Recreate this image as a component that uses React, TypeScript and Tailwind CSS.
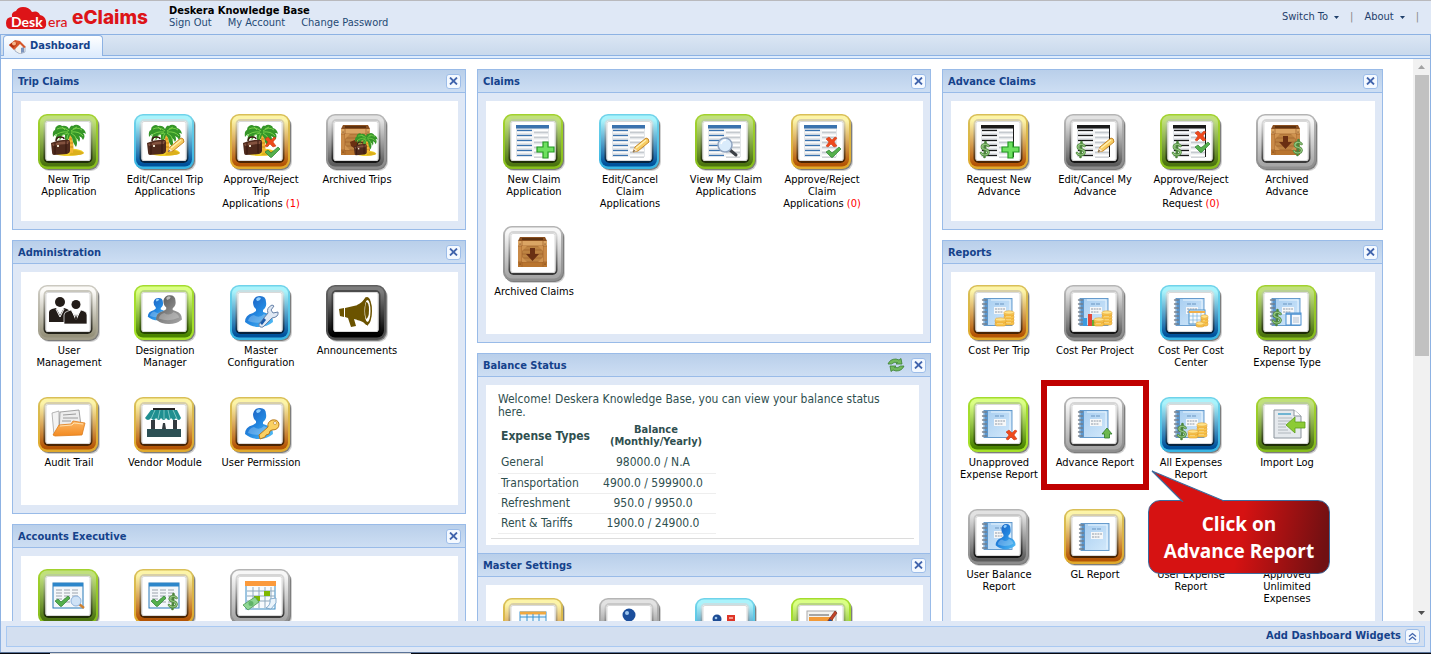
import React from "react";

type Tone = "green" | "lime" | "blue" | "gold" | "gray" | "silver" | "cream" | "black";

const tones: Record<Tone, { rim: [string, string]; body: [string, string]; ring: [string, string] }> = {
  green: { rim: ["#a2d22e", "#86bd1c"], body: ["#c0e07c", "#4c7410"], ring: ["#b9cf95", "#1f2d08"] },
  lime: { rim: ["#a4dc2e", "#a4e028"], body: ["#daff85", "#4a8400"], ring: ["#b8d680", "#274600"] },
  blue: { rim: ["#6fd3ea", "#38b4e2"], body: ["#aaf3fb", "#00529c"], ring: ["#c6e0e4", "#06233f"] },
  gold: { rim: ["#d9bf57", "#e0a92c"], body: ["#fcf4a8", "#b45506"], ring: ["#d8cfa8", "#4a2403"] },
  gray: { rim: ["#b5b5b5", "#8c8c8c"], body: ["#e2e2e2", "#5c5c5c"], ring: ["#c8c8c8", "#161616"] },
  silver: { rim: ["#b4b4b4", "#8f8f8f"], body: ["#f7f7f7", "#a6a6a6"], ring: ["#d6d6d6", "#3a3a3a"] },
  cream: { rim: ["#cbc9c0", "#a19d89"], body: ["#fbfaf7", "#95917a"], ring: ["#c9c7bd", "#232219"] },
  black: { rim: ["#5e5e5e", "#4c4c4c"], body: ["#7d7d7d", "#000000"], ring: ["#4b4b4b", "#000000"] },
};

function Gradients() {
  return (
    <svg className="absolute size-0" aria-hidden="true">
      <defs>
        {(Object.keys(tones) as Tone[]).map((t) => (
          <React.Fragment key={t}>
            {(["rim", "body", "ring"] as const).map((k) => (
              <linearGradient key={k} id={`${t}-${k}`} x1="0" y1="0" x2="0" y2="1">
                <stop offset="0.1" stopColor={tones[t][k][0]} />
                <stop offset="0.95" stopColor={tones[t][k][1]} />
              </linearGradient>
            ))}
          </React.Fragment>
        ))}
        <linearGradient id="book" x1="0" y1="0" x2="1" y2="1">
          <stop offset="0" stopColor="#a6cdf0" />
          <stop offset="1" stopColor="#d3e9fb" />
        </linearGradient>
        <linearGradient id="person-blue" x1="0" y1="0" x2="1" y2="1">
          <stop offset="0" stopColor="#1a55b8" />
          <stop offset="0.5" stopColor="#2387e0" />
          <stop offset="1" stopColor="#56c0f6" />
        </linearGradient>
        <linearGradient id="person-gray" x1="0" y1="0" x2="1" y2="1">
          <stop offset="0" stopColor="#4c4c4c" />
          <stop offset="0.6" stopColor="#8a8a8a" />
          <stop offset="1" stopColor="#a5a5a5" />
        </linearGradient>
        <linearGradient id="folder" x1="0" y1="0" x2="0" y2="1">
          <stop offset="0" stopColor="#fdb865" />
          <stop offset="1" stopColor="#f28a22" />
        </linearGradient>
      </defs>
    </svg>
  );
}

const Palm = () => (
  <g>
    <path d="M18 40q8-6 20-5 7 1 8 4-6 3-15 3-10 0-13-2z" fill="#f2d02a" />
    <path d="M31 41q13 1 15-2-4-3-11-3z" fill="#dcb01c" />
    <path d="M29 19q4 8 0 19l6 1q2-10-3-20z" fill="#f3b733" />
    <path d="M31 25h3M31 29h4M30 33h5" stroke="#c9831a" />
    <path
      d="M31 15q-2-4-7-3-2-2-5 0-2 1-2 4-3 1-2 7 2-3 4-3-2 4-1 7 2-2 3-5 1 2 1 4 2-2 2-5 2-1 3 0-1 3 1 7 3-2 4-7 3 3 3 7 2 4 3 5 2-4 0-9 2 1 3 4 2-3 0-6 3 1 4 4 3-4 0-7 2 0 3 1-1-5-5-6 0-2-3-3-3-1-5 1-2-2-4 3z"
      fill="#359628"
    />
    <path
      d="M31 17q-6-5-12-2M30 18q-8-1-13 4M30 19q-6 1-9 7M33 17q6-5 11-1M33 18q8-1 12 4M33 19q5 2 6 8M31 19q-2 3-2 6M24 13l3 3M39 13l-4 2"
      stroke="#7fd64c"
      strokeWidth=".9"
      fill="none"
    />
    <path d="M18 27q0-4 4-4t4 2" stroke="#3b1c12" strokeWidth="1.500" fill="none" />
    <path d="M13 29q9-4 18-3 1 0 1 3v8q0 2-3 3l-13 1q-2 0-2-3z" fill="#4f2a1d" />
    <path d="M14 30q9-3 17-3l-1 3q-8 0-15 2z" fill="#83523f" />
    <path d="M17 29v11M28 27v12" stroke="#34170f" />
    <rect x="19" y="31" width="2" height="2" fill="#e8dcc8" />
  </g>
);

const Crate = () => (
  <g>
    <path d="M17 11h25l2 4H15z" fill="#8a4f1f" />
    <path d="M19 12h21v2H19z" fill="#5e3210" />
    <rect x="15" y="15" width="29" height="26" rx="1" fill="#c98a48" />
    <rect x="15" y="15" width="29" height="5" fill="#dba564" />
    <rect x="15" y="36" width="29" height="5" fill="#b9752f" />
    <rect x="19" y="20" width="21" height="16" fill="#bd8342" />
    <path d="M19 24h21M19 28h21M19 32h21M15 20h29M15 36h29M19 15v26M40 15v26" stroke="#9d6029" strokeWidth=".7" />
    <path d="M19 20h5l-5 5zM40 20h-5l5 5zM19 36v-5l5 5zM40 36v-5l-5 5z" fill="#cf9350" />
    <path d="M17 18h.1M42 18h.1M17 38h.1M42 38h.1" stroke="#5a2e0c" strokeWidth="1.200" strokeLinecap="round" />
  </g>
);
const DownArrow = () => <path d="M27 22h5v6h4l-6.500 7-6.500-7h4z" fill="#6a2f12" />;

const Sheet = ({ dark = false }: { dark?: boolean }) => {
  const c = dark ? "#1a1a1a" : "#3a72ae";
  return (
    <g>
      <rect x="13" y="12" width="33" height="31" fill="#e3e6e9" />
      <rect x="13" y="11" width="33" height="3.500" fill={c} />
      {[17, 22, 27, 32, 37, 42].map((y) => (
        <g key={y}>
          <path d={`M14 ${y - 0.5}h15`} stroke={c} strokeWidth="1.300" />
          <path d={`M14 ${y + 1.2}h15`} stroke="#fff" strokeWidth="1.200" />
          <path d={`M31 ${y - 0.5}h14`} stroke="#ffffff" strokeWidth="2.200" />
          <path d={`M31 ${y + 1.2}h14`} stroke="#b3b8be" strokeWidth=".9" />
        </g>
      ))}
      <path d="M30 15v28" stroke="#f8f8f8" strokeWidth="1.500" />
      {dark && <path d="M45.500 12v31" stroke="#1a1a1a" />}
    </g>
  );
};

const Plus = () => (
  <path d="M40 28h5v5h6v5h-6v6h-5v-6h-6v-5h6z" fill="#6ee060" stroke="#249a22" strokeWidth="1.200" />
);
const Pencil = () => (
  <g>
    <path d="M34 38l2-5 11-9q3 0 3 4L39 37z" fill="#f8cd62" stroke="#c07e1e" strokeWidth=".9" />
    <path d="M37 34l10-8" stroke="#fff0b4" strokeWidth="1.500" />
    <path d="M34 38l1.500-4 3 3z" fill="#f6e3c8" />
    <path d="M34 38l2-1-1-1z" fill="#222" />
  </g>
);
const Cross = ({ x = 35, y = 23 }: { x?: number; y?: number }) => (
  <path
    transform={`translate(${x} ${y})`}
    d="M0 2l3-2 3 3 3-3 2 1-3 4 3 4-3 1-3-3-3 3-2-1 3-4z"
    fill="#ee4a1c"
    stroke="#c62f0c"
    strokeWidth=".5"
  />
);
const Check = ({ x = 35, y = 33 }: { x?: number; y?: number }) => (
  <path transform={`translate(${x} ${y})`} d="M0 5l3-2 3 3 7-6 2 2-8 8q-1 1-2 0z" fill="#55b04c" stroke="#2f7f35" strokeWidth=".7" />
);
const Dollar = ({ x = 12, y = 28 }: { x?: number; y?: number }) => (
  <g transform={`translate(${x} ${y})`} fill="none" strokeLinecap="round">
    <path d="M8.500 4Q7 2 4.500 2.300 1.500 3 2 5.500q.5 1.500 3.500 2 3 .7 3 3-.5 2.500-4 2.500Q2 13 1 11M5.500 0 4.500 15" stroke="#4c853b" strokeWidth="2.600" />
    <path d="M8.500 4Q7 2 4.500 2.300 1.500 3 2 5.500q.5 1.500 3.500 2 3 .7 3 3-.5 2.500-4 2.500Q2 13 1 11" stroke="#96c982" strokeWidth="1.200" />
  </g>
);
const Lens = () => (
  <g>
    <path d="M35 36l6 5" stroke="#3c4046" strokeWidth="3" strokeLinecap="round" />
    <circle cx="30" cy="31" r="7" fill="#d9ebfb" stroke="#8fa3bf" strokeWidth="1.500" />
    <path d="M26 30q1-4 5-4" stroke="#fff" strokeWidth="1.500" fill="none" />
  </g>
);
const Book = () => (
  <g>
    <rect x="16" y="13.500" width="28" height="27" fill="url(#book)" stroke="#5a93c8" strokeWidth=".9" />
    <rect x="17" y="14" width="3" height="26" fill="#5b96cc" />
    <path d="M23 15h19v24" stroke="#e9f5fe" fill="none" />
    <path d="M27 19h4m1 0h4" stroke="#6b95c0" />
    <rect x="26" y="22" width="12" height="7" fill="#f6f7f8" />
    <path d="M27 24h10M27 27h8" stroke="#8e99a6" strokeDasharray="2 .7" />
    {[15, 19, 23, 27, 31, 35, 39].map((y) => (
      <path key={y} d={`M14.500 ${y}h4`} stroke="#74808d" strokeWidth="1.300" strokeLinecap="round" />
    ))}
  </g>
);
const Stack = ({ x, y, n, w = 10 }: { x: number; y: number; n: number; w?: number }) => (
  <g>
    {Array.from({ length: n }, (_, i) => (
      <g key={i}>
        <rect x={x} y={y - i * 3 - 3} width={w} height="4" rx="2" fill="#f9c64e" stroke="#dd9826" strokeWidth=".6" />
        <path d={`M${x + 2} ${y - i * 3 - 1.5}h${w - 5}`} stroke="#ffe9a0" />
      </g>
    ))}
    <ellipse cx={x + w / 2} cy={y - n * 3 + 0.5} rx={w / 2} ry="1.700" fill="#ffe48c" stroke="#e0a030" strokeWidth=".6" />
  </g>
);
const Coins = () => (
  <g>
    <Stack x={36} y={39} n={4} />
    <Stack x={27} y={40} n={2} w={11} />
  </g>
);
const Person = ({ gray = false }: { gray?: boolean }) => (
  <g>
    <path d="M15 37q0-7 8-9l3-2v-2q-3-2-3-7 1-6 7-6t6 6q1 5-3 8v2l3 1q7 2 7 9-6 5-14 5t-14-5z" fill={gray ? "url(#person-gray)" : "url(#person-blue)"} />
    <path d="M26 14q2-3 5-1-1 3-4 3z" fill={gray ? "#b9b9b9" : "#8fd0ff"} />
    <path d="M18 36q1-5 6-6 5 4 10-1 5 2 6 6-11 5-22 1z" fill="#fff" opacity=".25" />
  </g>
);
const Grid = ({ check = false }: { check?: boolean }) => (
  <g>
    <rect x="15" y="14" width="30" height="25" fill="#f4f7fa" stroke="#2678b8" />
    <rect x="15" y="14" width="30" height="3.500" fill="#2c86ca" />
    {[21, 24, 27, 30, 33].map((y) => (
      <path key={y} d={`M18 ${y}h6m2 0h6m2 0h6`} stroke="#9ba3ab" strokeWidth="1.200" />
    ))}
    {check && <Check x={17} y={27} />}
  </g>
);

const glyphs: Record<string, React.ReactNode> = {
  trip: <Palm />,
  tripEdit: (<><Palm /><Pencil /></>),
  tripApprove: (<><Palm /><Cross /><Check /></>),
  tripArchive: (<><Crate /><path d="M24 28l7-3v11l-6-4z" fill="#6a2f12" /><g transform="translate(19 11) scale(.68 .74)"><Palm /></g></>),
  claim: (<><Sheet /><Plus /></>),
  claimEdit: (<><Sheet /><Pencil /></>),
  claimView: (<><Sheet /><Lens /></>),
  claimApprove: (<><Sheet /><Cross /><Check /></>),
  crate: (<><Crate /><DownArrow /></>),
  advance: (<><Sheet dark /><Dollar /><Plus /></>),
  advanceEdit: (<><Sheet dark /><Dollar /><Pencil /></>),
  advanceApprove: (<><Sheet dark /><Dollar /><Cross x={35} y={17} /><Check x={35} y={28} /></>),
  advanceArchive: (<><Crate /><DownArrow /><Dollar x={37} y={26} /></>),
  users: (
    <g fill="#231c18">
      <circle cx="22" cy="17" r="5" />
      <path d="M11 37V27q0-2 3-3l4-1 4 7 4-7q5 1 6 4v10z" />
      <path d="M18 24l4 8 4-8" stroke="#fff" fill="none" />
      <circle cx="38" cy="20" r="5.500" fill="#fff" />
      <circle cx="38" cy="19.500" r="4.500" />
      <path d="M26 39V30q0-3 4-4l3-1 5 7 5-7 3 1q3 1 3 4v9z" stroke="#fff" strokeWidth=".7" />
      <path d="M34 26l4 9 4-9" stroke="#fff" fill="none" />
      <path d="M38 29l-1 5 1 3 1-3z" />
    </g>
  ),
  designation: (<><g transform="translate(3 5) scale(.72)"><Person /></g><g transform="translate(8 0) scale(.93)"><Person gray /></g></>),
  config: (
    <>
      <Person />
      <path d="M29 39l9-11q-2-5 4-8l2 1-3 4 2 3 5-1q1 5-6 6l-9 9q-4 1-4-3z" fill="#dfe8f3" stroke="#6681a8" />
      <path d="M30 38l4-5 2 2-4 5z" fill="#1d5aa8" />
    </>
  ),
  announce: (
    <g fill="#6b5300">
      <path d="M19 23l13-3V35l-4-1 2 7-5 1-3-9-3-1z" />
      <path d="M13 24l5-1v9l-4-1z" />
      <path d="M31 20q6-3 9-8l2 29q-5-5-11-6z" />
      <ellipse cx="41" cy="26" rx="5" ry="14" />
      <ellipse cx="41.500" cy="26" rx="3" ry="11" fill="#fff" />
      <path d="M40 17q3 0 3 8t-3 9q-2-8 0-17z" />
    </g>
  ),
  folder: (
    <g>
      <path d="M14 16l7-2v23l-5 1z" fill="#f3f3f3" stroke="#999" strokeWidth=".7" />
      <path d="M22 15l19-2 3 24H21z" fill="#ededed" stroke="#8d8d8d" strokeWidth=".8" />
      <path d="M25 18l13-1M25 21h15M24 24h9" stroke="#9a9a9a" />
      <path d="M21 28l12-1 2-3 12 2-3 12-27 1-2-1z" fill="url(#folder)" stroke="#e07d1c" strokeWidth=".8" />
      <path d="M22 29l12-1 2-2 9 1" stroke="#ffe0ae" fill="none" />
    </g>
  ),
  shop: (
    <g>
      <rect x="19" y="11" width="22" height="2" fill="#222" />
      <path d="M17 13h26l4 8q-2 4-5 0-2 4-5 0-2 4-5 0-2 4-5 0-2 4-5 0-2 4-5 0-3 4-6 0z" fill="#1f8f90" />
      <path d="M21 13l-4 9M26 13l-2 9M30 13v9M34 13l2 9M39 13l4 9" stroke="#7cc4c0" />
      <path d="M17 23h4v9h-4zM39 23h4v9h-4zM28 32l1-6h2l1 6z" fill="#333b40" />
      <rect x="13" y="32" width="34" height="8" fill="#2c5054" />
    </g>
  ),
  permission: (
    <>
      <Person />
      <path d="M29 38l9-8q-1-5 4-7 6-1 7 4 0 6-7 6l-2 1-1 3-3 1-1 2-5 2z" fill="#fad062" stroke="#b7791c" />
      <circle cx="45" cy="26" r="1.500" fill="#fff" stroke="#b7791c" strokeWidth=".6" />
    </>
  ),
  bookCoins: (<><Book /><Coins /></>),
  bookProject: (
    <>
      <Book />
      <path d="M19 33h4v8h-4z" fill="#3c9be0" />
      <path d="M24 29h4v12h-4z" fill="#e4483a" />
      <path d="M28 35h3v6h-3z" fill="#5fae35" />
      <Stack x={38} y={39} n={4} />
      <Stack x={30} y={40} n={2} />
    </>
  ),
  bookCenter: (
    <>
      <Book />
      <rect x="29" y="25" width="16" height="14" fill="#f5fafd" stroke="#4a90c8" />
      <path d="M29 27h16" stroke="#f2b04a" strokeWidth="2" />
      <path d="M29 31h16M29 35h16M33 28v11M37 28v11M41 28v11" stroke="#7db3d8" strokeWidth=".7" />
      <Stack x={41} y={40} n={3} w={7} />
      <Stack x={36} y={41} n={1} w={8} />
    </>
  ),
  bookType: (
    <>
      <Book />
      <Dollar x={16} y={25} />
      <rect x="30" y="28" width="15" height="12" fill="#f5f9fd" stroke="#4a8fd0" />
      <path d="M30 29h15M35 29v11" stroke="#4a8fd0" strokeWidth="1.500" />
      <path d="M37 32h6v6h-6z" fill="#d5dde6" />
    </>
  ),
  bookReject: (<><Book /><Cross x={38} y={33} /></>),
  bookUp: (<><Book /><path d="M43 31l5 6h-2.500v4h-5v-4H38z" fill="#6db84e" stroke="#2f7a2a" strokeWidth=".8" /></>),
  bookAll: (<><Book /><Dollar x={17} y={27} /><Stack x={37} y={39} n={4} /><Stack x={28} y={40} n={2} /></>),
  import: (
    <g>
      <path d="M18 13h20l7 6v22H18z" fill="#e5e9ed" stroke="#8b949c" />
      <path d="M38 13v6h7" fill="#fff" stroke="#8b949c" />
      <path d="M22 17h13" stroke="#6fb4d2" strokeWidth="2" />
      <path d="M22 21h14M22 24h12M22 27h8M22 30h8M22 33h10M22 36h13" stroke="#b0b7bd" />
      <path d="M30 28l9-8v5h10v6H39v5z" fill="#8ccb35" stroke="#5a9c1a" strokeWidth=".8" />
    </g>
  ),
  bookUser: (<><Book /><g transform="translate(17 6) scale(.71 .82)"><Person /></g></>),
  book: <g transform="translate(1 1)"><Book /></g>,
  gridView: (
    <>
      <Grid check />
      <path d="M41 35l5 4" stroke="#d08030" strokeWidth="2.500" />
      <circle cx="38" cy="32" r="5" fill="#cfe2f6" stroke="#8fb2dc" />
    </>
  ),
  gridPay: (<><Grid check /><Dollar x={34} y={25} /></>),
  calendar: (
    <>
      <rect x="16" y="14" width="29" height="26" fill="#f8fbfd" stroke="#3b8cc4" />
      <rect x="15" y="12" width="31" height="5" fill="#fb9a3c" />
      <path d="M17 22h28M17 27h28M17 32h28M23 18v21M29 18v21M35 18v21M41 18v21" stroke="#8fa9bd" />
      <path d="M34 22h6v5h-6zM24 27h6v5h-6z" fill="#7fb800" />
      <path d="M36 39q5-3 4-9l6-1v5l-5 6z" fill="#eaf4fb" stroke="#6e9cc2" strokeWidth=".8" />
      <path d="M13 36l12-8 4 5-11 8z" fill="#8fd694" stroke="#4c9a55" strokeWidth=".8" />
      <circle cx="21" cy="34.500" r="2.500" fill="#5fb368" />
    </>
  ),
  masterGrid: (
    <>
      <rect x="17" y="14" width="26" height="24" fill="#eaf5fd" stroke="#3a92d0" />
      <path d="M17 15h26" stroke="#f0a840" strokeWidth="3" />
      <path d="M17 19h26M17 24h26M24 16v20M30 16v20M36 16v20" stroke="#3a92d0" />
    </>
  ),
  masterUser: (<><circle cx="30" cy="17" r="6.500" fill="#1c4f9c" /><circle cx="28" cy="15" r="2" fill="#9ec6ee" /><path d="M18 36q2-12 12-12t12 12z" fill="#2d6cc0" /></>),
  masterOrg: (<><circle cx="22" cy="21" r="4.500" fill="#1d4c94" /><circle cx="21" cy="20" r="1.300" fill="#9ec6ee" /><rect x="32" y="17" width="8" height="9" fill="#df3527" /><rect x="34" y="19" width="4" height="2" fill="#f29a8e" /></>),
  masterForm: (
    <>
      <rect x="16" y="13" width="29" height="27" fill="#f3f3f0" stroke="#aaa" />
      <path d="M18 17h20" stroke="#7a7a7a" strokeWidth="1.300" />
      <path d="M18 21h24" stroke="#f29a38" strokeWidth="4" />
      <path d="M36 24l8-11 2 2-7 10z" fill="#c24528" stroke="#6c1c10" strokeWidth=".6" />
      <path d="M35 26l4-5 4 3-4 4z" fill="#1b4f94" />
    </>
  ),
};

function Tile({ tone, glyph }: { tone: Tone; glyph: string }) {
  return (
    <svg width="62" height="57" viewBox="0 0 62 57" aria-hidden="true" className="shrink-0">
      <rect x="2" y="3" width="60" height="54" rx="9" fill="#000" opacity=".18" />
      <rect x="1.500" y="2" width="59.500" height="54" rx="9" fill="#000" opacity=".4" />
      <rect x="0" y="0" width="60" height="55" rx="9" fill={`url(#${tone}-rim)`} />
      <rect x="2" y="1.500" width="56" height="51" rx="7" fill={`url(#${tone}-body)`} />
      <rect x="5.500" y="5" width="49" height="44" rx="5" fill={`url(#${tone}-ring)`} />
      <rect x="7.500" y="7" width="45" height="40" rx="2.500" fill="#fff" />
      <rect x="8" y="7.500" width="44" height="39" rx="2" fill="none" stroke="#d9d9d9" />
      {glyphs[glyph]}
    </svg>
  );
}

interface Item {
  tone: Tone;
  glyph: string;
  lines: string[];
  count?: number;
  callout?: boolean;
  iconOnly?: boolean;
}

function Callout() {
  return (
    <div className="absolute left-[101px] top-[78px] z-20 w-[182px]">
      <div className="h-[30px]">
        <svg className="absolute left-0 top-0 z-10" width="80" height="32" viewBox="0 0 80 32" aria-hidden="true">
          <path d="M35 32L4 1l72 30" fill="#d61212" stroke="#3d6c9e" strokeWidth="1.200" />
          <path d="M36 31.500h38" stroke="#d61212" strokeWidth="2" />
        </svg>
      </div>
      <div className="rounded-xl border border-[#3d6c9e] bg-[linear-gradient(100deg,#d61212_0%,#d61212_50%,#701012_96%)] pt-2.5 pb-2 text-center font-['Open_Sans',sans-serif] text-[19px] leading-[27px] font-bold text-white">
        Click on
        <br />
        Advance Report
      </div>
    </div>
  );
}

function Launcher({ item }: { item: Item }) {
  const name = item.lines.join(" ");
  return (
    <div className="relative h-28 w-24 pt-[5px]">
      <button
        type="button"
        aria-label={item.iconOnly ? name : undefined}
        className="flex w-full cursor-pointer flex-col items-center gap-[3px] text-center"
      >
        <Tile tone={item.tone} glyph={item.glyph} />
        {!item.iconOnly && (
          <span className="text-[11px] leading-3 whitespace-nowrap text-black">
            {item.lines.map((line, i) => (
              <span key={line} className="block">
                {line}
                {item.count !== undefined && i === item.lines.length - 1 && (
                  <span className="text-[#ff0000]"> ({item.count})</span>
                )}
              </span>
            ))}
          </span>
        )}
      </button>
      {item.callout && (
        <>
          <div className="pointer-events-none absolute -left-1.5 -top-3 z-10 h-[110px] w-[108px] border-6 border-[#c00000]" />
          <Callout />
        </>
      )}
    </div>
  );
}

function CloseButton({ label }: { label: string }) {
  return (
    <button
      type="button"
      aria-label={`Close ${label}`}
      className="flex size-[15px] items-center justify-center rounded-[3px] border border-[#9dbde9] bg-[#f4f9ff]"
    >
      <svg width="9" height="8" viewBox="0 0 9 8" aria-hidden="true">
        <path d="M1 .5l7 7M8 .5l-7 7" stroke="#4265ad" strokeWidth="1.800" />
      </svg>
    </button>
  );
}

function Panel({ title, tools, flush, children }: { title: string; tools?: React.ReactNode; flush?: boolean; children: React.ReactNode }) {
  return (
    <section className={flush ? "border-x border-[#99bbe8]" : "mb-2.5 border-x border-b border-[#99bbe8]"}>
      <header className="flex h-6 items-center gap-1.5 border-y border-[#99bbe8] bg-linear-to-b from-[#b9cfea] to-[#cddef3] pr-1 pl-[5px]">
        <h2 className="flex-1 pt-px text-[11px] leading-4 font-bold text-[#15428b]">{title}</h2>
        {tools}
        <CloseButton label={title} />
      </header>
      <div className="bg-[#dfe8f6] p-2 pr-[7px]">{children}</div>
    </section>
  );
}

function Launchers({ items, tail }: { items: Item[]; tail?: "short" | "long" }) {
  return (
    <div className={`flex flex-wrap bg-white pt-2 ${tail === "long" ? "pb-32" : tail === "short" ? "pb-px" : ""}`}>
      {items.map((item) => (
        <Launcher key={item.lines.join(" ")} item={item} />
      ))}
    </div>
  );
}

const trip: Item[] = [
  { tone: "green", glyph: "trip", lines: ["New Trip", "Application"] },
  { tone: "blue", glyph: "tripEdit", lines: ["Edit/Cancel Trip", "Applications"] },
  { tone: "gold", glyph: "tripApprove", lines: ["Approve/Reject", "Trip", "Applications"], count: 1 },
  { tone: "gray", glyph: "tripArchive", lines: ["Archived Trips"] },
];
const admin: Item[] = [
  { tone: "cream", glyph: "users", lines: ["User", "Management"] },
  { tone: "lime", glyph: "designation", lines: ["Designation", "Manager"] },
  { tone: "blue", glyph: "config", lines: ["Master", "Configuration"] },
  { tone: "black", glyph: "announce", lines: ["Announcements"] },
  { tone: "gold", glyph: "folder", lines: ["Audit Trail"] },
  { tone: "gold", glyph: "shop", lines: ["Vendor Module"] },
  { tone: "gold", glyph: "permission", lines: ["User Permission"] },
];
const accounts: Item[] = [
  { tone: "green", glyph: "gridView", lines: ["Review"], iconOnly: true },
  { tone: "gold", glyph: "gridPay", lines: ["Payment"], iconOnly: true },
  { tone: "silver", glyph: "calendar", lines: ["Calendar"], iconOnly: true },
];
const claims: Item[] = [
  { tone: "green", glyph: "claim", lines: ["New Claim", "Application"] },
  { tone: "blue", glyph: "claimEdit", lines: ["Edit/Cancel", "Claim", "Applications"] },
  { tone: "green", glyph: "claimView", lines: ["View My Claim", "Applications"] },
  { tone: "gold", glyph: "claimApprove", lines: ["Approve/Reject", "Claim", "Applications"], count: 0 },
  { tone: "silver", glyph: "crate", lines: ["Archived Claims"] },
];
const settings: Item[] = [
  { tone: "gold", glyph: "masterGrid", lines: ["Table"], iconOnly: true },
  { tone: "gray", glyph: "masterUser", lines: ["User"], iconOnly: true },
  { tone: "blue", glyph: "masterOrg", lines: ["Organization"], iconOnly: true },
  { tone: "lime", glyph: "masterForm", lines: ["Form"], iconOnly: true },
];
const advance: Item[] = [
  { tone: "gold", glyph: "advance", lines: ["Request New", "Advance"] },
  { tone: "gray", glyph: "advanceEdit", lines: ["Edit/Cancel My", "Advance"] },
  { tone: "green", glyph: "advanceApprove", lines: ["Approve/Reject", "Advance", "Request"], count: 0 },
  { tone: "silver", glyph: "advanceArchive", lines: ["Archived", "Advance"] },
];
const reports: Item[] = [
  { tone: "gold", glyph: "bookCoins", lines: ["Cost Per Trip"] },
  { tone: "gray", glyph: "bookProject", lines: ["Cost Per Project"] },
  { tone: "blue", glyph: "bookCenter", lines: ["Cost Per Cost", "Center"] },
  { tone: "green", glyph: "bookType", lines: ["Report by", "Expense Type"] },
  { tone: "lime", glyph: "bookReject", lines: ["Unapproved", "Expense Report"] },
  { tone: "silver", glyph: "bookUp", lines: ["Advance Report"], callout: true },
  { tone: "blue", glyph: "bookAll", lines: ["All Expenses", "Report"] },
  { tone: "green", glyph: "import", lines: ["Import Log"] },
  { tone: "gray", glyph: "bookUser", lines: ["User Balance", "Report"] },
  { tone: "gold", glyph: "book", lines: ["GL Report"] },
  { tone: "blue", glyph: "book", lines: ["User Expense", "Report"] },
  { tone: "green", glyph: "book", lines: ["Approved", "Unlimited", "Expenses"] },
];

const balances = [
  ["General", "98000.0 / N.A"],
  ["Transportation", "4900.0 / 599900.0"],
  ["Refreshment", "950.0 / 9950.0"],
  ["Rent & Tariffs", "1900.0 / 24900.0"],
];

function BalanceStatus() {
  return (
    <div className="mr-1 h-40 bg-white px-[5px] pt-2 text-[12px] leading-[13px] text-[#2f4f4f]">
      <div className="border-b border-[#dcdcdc] px-[7px] pb-1">
        <p>Welcome! Deskera Knowledge Base, you can view your balance status here.</p>
        <table className="w-[218px]">
          <thead>
            <tr className="h-[34px]">
              <th className="w-[98px] pl-[3px] text-left whitespace-nowrap">Expense Types</th>
              <th className="text-center text-[11px] leading-3">
                Balance
                <br />
                (Monthly/Yearly)
              </th>
            </tr>
          </thead>
          <tbody>
            {balances.map(([name, value]) => (
              <tr key={name} className="h-5 border-b border-[#eeeeee]">
                <td className="pl-[3px]">{name}</td>
                <td className="pr-1.5 text-center whitespace-nowrap">{value}</td>
              </tr>
            ))}
          </tbody>
        </table>
      </div>
    </div>
  );
}

const RefreshButton = () => (
  <button type="button" aria-label="Refresh balance">
    <svg width="18" height="14" viewBox="0 0 18 14" aria-hidden="true">
      <path d="M1 6q2-5 8-5l3 1 2-1.500L15 6H9l1.500-1.500Q7 3.500 4.500 6z" fill="#71b95c" stroke="#3c8034" strokeWidth=".8" />
      <path d="M17 8q-2 5-8 5l-3-1-2 1.500L3 8h6L7.500 9.500Q11 10.500 13.500 8z" fill="#71b95c" stroke="#3c8034" strokeWidth=".8" />
    </svg>
  </button>
);

function Logo() {
  return (
    <a href="#home" aria-label="Deskera eClaims" className="flex w-[146px] items-center gap-0.5 pl-1.5 text-[#dd1418]">
      <svg width="64" height="24" viewBox="0 0 64 24" aria-hidden="true" className="shrink-0">
        <path d="M5 23q-5 0-5-6t6-6q-1-5 4-6Q12 1 17 1q6 0 9 5 6-2 8 3 5 1 6 6 1 8-4 8z" fill="#dd1418" />
        <text x="5" y="21" fill="#fff" fontFamily="Lato, sans-serif" fontWeight="700" fontSize="14">Desk</text>
        <text x="42" y="21" fill="#dd1418" fontFamily="Lato, sans-serif" fontWeight="500" fontSize="14">era</text>
      </svg>
      <span className="font-[Inter,sans-serif] text-[19px] leading-6 font-extrabold">eClaims</span>
    </a>
  );
}

const HomeIcon = () => (
  <svg width="17" height="15" viewBox="0 0 17 15" aria-hidden="true">
    <path d="M6 8l5-4 5 4v5l-5 2-5-3z" fill="#f4f2ee" stroke="#8d9bb5" strokeWidth=".7" />
    <path d="M12 9l3-1v5l-3 1z" fill="#7b94bd" />
    <path d="M0 6l6-5 5 1 6 6-2 1-4-4-6 6z" fill="#d6562b" />
    <path d="M0 6l5-4 3 3-4 4z" fill="#b8320f" />
    <circle cx="5" cy="4.500" r="2" fill="#f6b68c" />
  </svg>
);

const Caret = () => (
  <svg width="5" height="3" aria-hidden="true">
    <path d="M0 0h5L2.500 3z" fill="#1f3f6b" />
  </svg>
);

export default function App() {
  return (
    <div className="flex h-screen flex-col overflow-hidden bg-[#dfe8f6] font-['DejaVu_Sans_Condensed','DejaVu_Sans',sans-serif] text-[11px]">
      <Gradients />
      <header className="flex h-[34px] shrink-0 items-center border-t border-[#b9b9bd]">
        <Logo />
        <div className="ml-[23px] pb-0.5 leading-3">
          <p className="font-bold text-black">Deskera Knowledge Base</p>
          <nav className="flex gap-4 text-[#1f4a75]">
            <a href="#signout">Sign Out</a>
            <a href="#account">My Account</a>
            <a href="#password">Change Password</a>
          </nav>
        </div>
        <nav className="ml-auto flex items-center gap-[11px] pr-3 text-[#1f3f6b]">
          <button type="button" className="flex items-center gap-1.5">
            Switch To
            <Caret />
          </button>
          <span className="text-[#888]">|</span>
          <button type="button" className="flex items-center gap-1.5">
            About
            <Caret />
          </button>
          <span className="text-[#888]">|</span>
        </nav>
      </header>

      <div className="flex min-h-0 flex-1 flex-col border border-b-0 border-[#8db2e3]">
        <div className="flex h-[21px] shrink-0 items-end border-b border-[#8db2e3] bg-linear-to-b from-[#dbe6f4] to-[#c9d9ec] px-0.5">
          <button
            type="button"
            className="-mb-px flex h-[21px] items-center gap-1 rounded-t-[4px] border border-b-0 border-[#8db2e3] bg-linear-to-b from-white to-[#deecfd] pr-3 pl-[5px] font-bold text-[#15428b]"
          >
            <HomeIcon />
            Dashboard
          </button>
        </div>
        <div className="h-[3px] shrink-0 border-b border-[#8db2e3] bg-[#deecfd]" />

        <main className="flex min-h-0 flex-1 bg-white">
          <div className="grid min-w-0 flex-1 grid-cols-[454fr_454fr_441fr] items-start gap-x-[11px] overflow-hidden pt-2.5 pr-[30px] pl-[11px]">
            <div>
              <Panel title="Trip Claims"><Launchers items={trip} /></Panel>
              <Panel title="Administration"><Launchers items={admin} tail="short" /></Panel>
              <Panel title="Accounts Executive"><Launchers items={accounts} /></Panel>
            </div>
            <div>
              <Panel title="Claims"><Launchers items={claims} tail="short" /></Panel>
              <Panel title="Balance Status" tools={<RefreshButton />} flush><BalanceStatus /></Panel>
              <Panel title="Master Settings"><Launchers items={settings} /></Panel>
            </div>
            <div>
              <Panel title="Advance Claims"><Launchers items={advance} /></Panel>
              <Panel title="Reports"><Launchers items={reports} tail="long" /></Panel>
            </div>
          </div>
          <div className="flex w-[17px] shrink-0 flex-col items-center bg-[#f1f1f1]" aria-hidden="true">
            <svg width="17" height="16"><path d="M5 10l3.500-4 3.500 4z" fill="#a3a3a3" /></svg>
            <div className="flex w-3.5 flex-1 flex-col"><div className="h-[53%] bg-[#c1c1c1]" /></div>
            <svg width="17" height="16"><path d="M5 6l3.500 4 3.500-4z" fill="#505050" /></svg>
          </div>
        </main>

        <footer className="shrink-0 px-[5px] pt-[5px] pb-[5px]">
          <div className="flex h-[21px] items-center justify-end gap-1 border border-[#a9c9f2] bg-[#d3dff0] pr-1 font-bold text-[#15428b]">
            Add Dashboard Widgets
            <button type="button" aria-label="Expand widgets" className="flex size-[15px] items-center justify-center rounded-[3px] border border-[#9dbde9] bg-[#f4f9ff]">
              <svg width="9" height="9" viewBox="0 0 9 9" fill="none" stroke="#4265ad" strokeWidth="1.300" aria-hidden="true">
                <path d="M1 4.500l3.500-3 3.500 3M1 8l3.500-3 3.500 3" />
              </svg>
            </button>
          </div>
        </footer>
      </div>
      <div className="flex h-0.5 shrink-0 border-t border-[#5a7398] bg-[#05070f]">
        <div className="ml-[50px] w-[361px] bg-[#d5d5d5]" />
      </div>
    </div>
  );
}
